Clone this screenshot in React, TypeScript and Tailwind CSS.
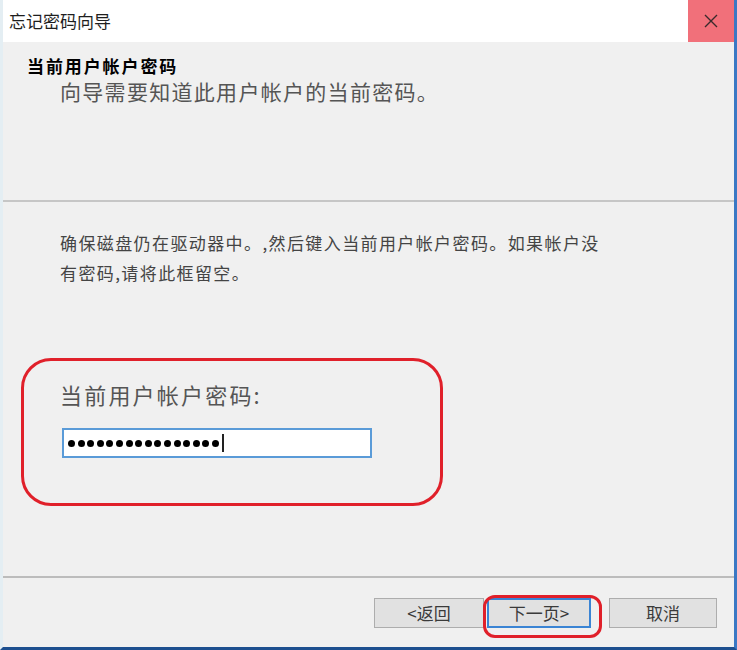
import React from 'react';

const font = { fontFamily: '"Microsoft YaHei", "Noto Sans CJK SC", "Noto Sans", sans-serif' };

export default function App() {
  const dots = Array.from({ length: 16 });
  return (
    <div
      className="relative flex h-[650px] w-[737px] flex-col overflow-hidden border-l-[3px] border-r-[3px] border-b-[3px] border-l-[#e4eef3] border-r-[#3a78c4] border-b-[#1d4f8f] bg-[#f0f0f0]"
      style={font}
    >
      {/* title bar */}
      <div className="flex h-[42px] shrink-0 items-center justify-between bg-white">
        <span className="pl-[6px] text-[17px] text-[#1e1e1e]">忘记密码向导</span>
        <div className="flex h-[42px] w-[46px] items-center justify-center bg-[#f1707a]">
          <svg width="16" height="16" viewBox="0 0 16 16">
            <path d="M2 2 L14 14 M14 2 L2 14" stroke="#3a2a2c" strokeWidth="1.4" />
          </svg>
        </div>
      </div>

      {/* header */}
      <div className="flex h-[158px] shrink-0 flex-col pl-[24px] pt-[13px]">
        <div className="text-[17px] font-bold leading-[22px] tracking-[1.9px] text-black">当前用户帐户密码</div>
        <div className="pl-[33px] text-[21px] leading-[28px] tracking-[1.3px] text-[#555]">向导需要知道此用户帐户的当前密码。</div>
      </div>
      <div className="h-[2px] shrink-0 bg-[#c6c6c6]" />

      {/* body */}
      <div className="flex flex-1 flex-col pl-[57px] pt-[26px]">
        <p className="w-[548px] text-[17px] leading-[30px] tracking-[1.4px] text-[#444]">
          确保磁盘仍在驱动器中。,然后键入当前用户帐户密码。如果帐户没有密码,请将此框留空。
        </p>
        <div className="mt-[92px] text-[22px] leading-[28px] tracking-[2.2px] text-[#555]">当前用户帐户密码:</div>
        <div className="ml-[2px] mt-[20px] flex h-[30px] w-[310px] items-center gap-[2.6px] border-2 border-[#5a9bd8] bg-white pl-[4px]">
          {dots.map((_, i) => (
            <span key={i} className="h-[7px] w-[7px] rounded-full bg-black" />
          ))}
          <span className="h-[18px] w-[2px] bg-[#222]" />
        </div>
      </div>

      <div className="h-[2px] shrink-0 bg-[#bcbcbc]" />

      {/* buttons */}
      <div className="flex h-[69px] shrink-0 items-start justify-end gap-[3px] pr-[17px] pt-[20px]">
        <button className="h-[30px] w-[110px] border border-[#adadad] bg-[#e1e1e1] text-[17px] text-[#3a3a3a]">&lt;返回</button>
        <button className="h-[30px] w-[104px] border-2 border-[#3a84d4] bg-[#e1e1e1] text-[17px] text-[#3a3a3a]">下一页&gt;</button>
        <button className="ml-[15px] h-[30px] w-[108px] border border-[#adadad] bg-[#e1e1e1] text-[17px] text-[#3a3a3a]">取消</button>
      </div>

      {/* red annotation rings */}
      <div className="pointer-events-none absolute left-[18px] top-[358px] h-[148px] w-[422px] rounded-[30px] border-[3px] border-[#e0202a]" />
      <div className="pointer-events-none absolute left-[480px] top-[595px] h-[43px] w-[119px] rounded-[12px] border-[3px] border-[#e0202a]" />
    </div>
  );
}
